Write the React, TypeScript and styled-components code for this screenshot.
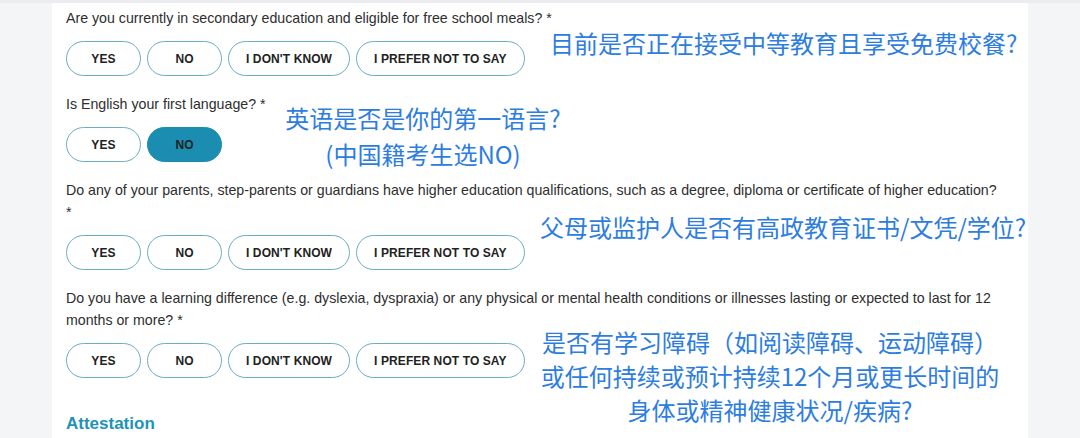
import styled, { createGlobalStyle } from "styled-components";

const GlobalStyle = createGlobalStyle`
  html, body {
    margin: 0;
    padding: 0;
    background: #f4f5f7;
  }
  body {
    font-family: "Liberation Sans", Arial, sans-serif;
    color: #2b2b2b;
  }
`;

const Page = styled.div`
  width: 1080px;
  height: 438px;
  overflow: hidden;
  border-top: 3px solid #eaecef;
  box-sizing: border-box;
  display: flex;
`;

const Panel = styled.div`
  position: relative;
  margin-left: 52px;
  width: 976px;
  background: #ffffff;
  padding: 4px 0 0 14px;
  box-sizing: border-box;
  display: flex;
  flex-direction: column;
`;

const Form = styled.div`
  width: 935px;
  display: flex;
  flex-direction: column;
  gap: 17px;
`;

const Question = styled.div`
  display: flex;
  flex-direction: column;
  gap: 12px;
`;

const Label = styled.div`
  font-size: 14.2px;
  line-height: 22px;
  color: #2e2e2e;
`;

const Options = styled.div`
  display: flex;
  gap: 6px;
`;

const Option = styled.button<{ $active?: boolean }>`
  height: 35px;
  min-width: 75px;
  padding: 0 17px;
  box-sizing: border-box;
  border-radius: 18px;
  border: 1.5px solid ${(p) => (p.$active ? "#1a8db0" : "#6aaec2")};
  background: ${(p) => (p.$active ? "#1a8db0" : "#ffffff")};
  color: #222;
  font-family: "Liberation Sans", Arial, sans-serif;
  font-weight: 700;
  font-size: 12px;
  letter-spacing: 0.1px;
  cursor: pointer;
`;

const Heading = styled.h3`
  margin: 36px 0 0;
  font-size: 17px;
  font-weight: 700;
  color: #1d93b6;
`;

// annotations written over the screenshot
const Note = styled.div<{ $x: number; $y: number; $w?: number; $lh?: number }>`
  position: absolute;
  left: ${(p) => p.$x}px;
  top: ${(p) => p.$y}px;
  width: ${(p) => (p.$w ? `${p.$w}px` : "auto")};
  white-space: nowrap;
  text-align: center;
  font-family: "Noto Sans CJK SC", "Noto Sans", sans-serif;
  font-size: 24px;
  line-height: ${(p) => p.$lh ?? 34}px;
  color: #2d7ddf;
`;

const ALL = ["YES", "NO", "I DON'T KNOW", "I PREFER NOT TO SAY"];

const questions = [
  {
    label: "Are you currently in secondary education and eligible for free school meals? *",
    options: ALL,
  },
  { label: "Is English your first language? *", options: ["YES", "NO"], picked: "NO" },
  {
    label:
      "Do any of your parents, step-parents or guardians have higher education qualifications, such as a degree, diploma or certificate of higher education? *",
    options: ALL,
  },
  {
    label:
      "Do you have a learning difference (e.g. dyslexia, dyspraxia) or any physical or mental health conditions or illnesses lasting or expected to last for 12 months or more? *",
    options: ALL,
  },
];

export default function App() {
  return (
    <>
      <GlobalStyle />
      <Page>
        <Panel>
          <Form>
            {questions.map((q) => (
              <Question key={q.label}>
                <Label>{q.label}</Label>
                <Options>
                  {q.options.map((o) => (
                    <Option key={o} $active={q.picked === o}>
                      {o}
                    </Option>
                  ))}
                </Options>
              </Question>
            ))}
          </Form>
          <Heading>Attestation</Heading>

          <Note $x={498} $y={25} $lh={30}>目前是否正在接受中等教育且享受免费校餐?</Note>
          <Note $x={211} $y={97} $w={320} $lh={36}>
            英语是否是你的第一语言?
            <br />
            (中国籍考生选NO)
          </Note>
          <Note $x={488} $y={211} $lh={26}>父母或监护人是否有高政教育证书/文凭/学位?</Note>
          <Note $x={478} $y={322} $w={480}>
            是否有学习障碍（如阅读障碍、运动障碍）
            <br />
            或任何持续或预计持续12个月或更长时间的
            <br />
            身体或精神健康状况/疾病?
          </Note>
        </Panel>
      </Page>
    </>
  );
}
